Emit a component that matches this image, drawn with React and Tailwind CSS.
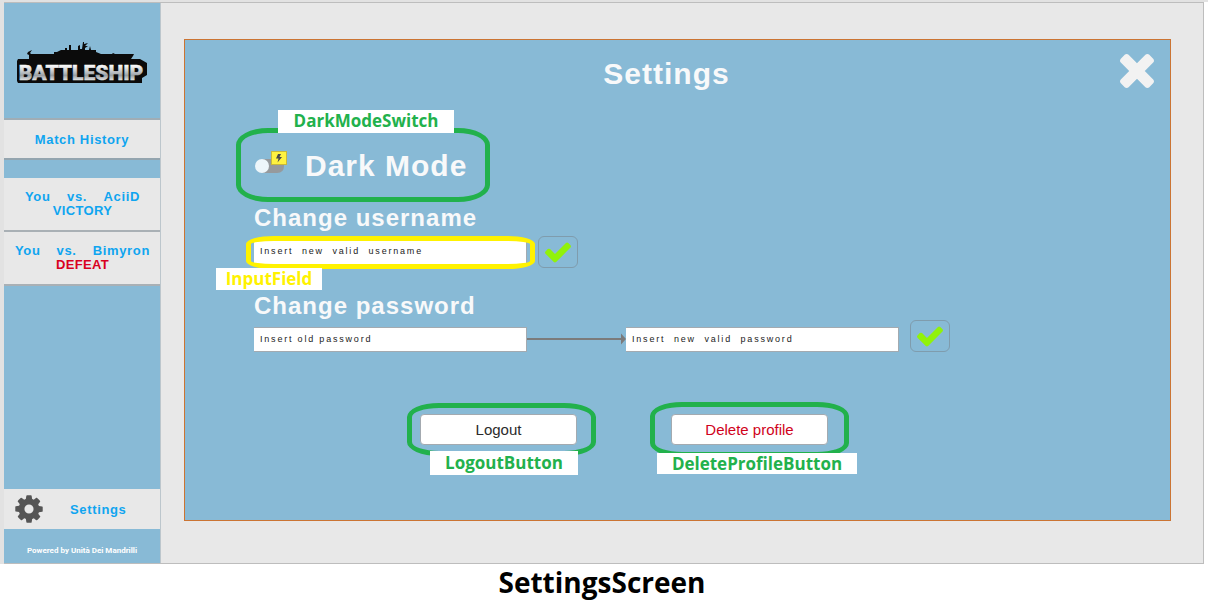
import { useState } from "react";

const CHECK =
  "M1671 566q0 40-28 68l-724 724-136 136q-28 28-68 28t-68-28l-136-136-362-362q-28-28-28-68t28-68l136-136q28-28 68-28t68 28l294 295 656-657q28-28 68-28t68 28l136 136q28 28 28 68z";
const TIMES =
  "M1490 1322q0 40-28 68l-136 136q-28 28-68 28t-68-28l-294-294-294 294q-28 28-68 28t-68-28l-136-136q-28-28-28-68t28-68l294-294-294-294q-28-28-28-68t28-68l136-136q28-28 68-28t68 28l294 294 294-294q28-28 68-28t68 28l136 136q28 28 28 68t-28 68l-294 294 294 294q28 28 28 68z";
const COG =
  "M1152 896q0-106-75-181t-181-75-181 75-75 181 75 181 181 75 181-75 75-181zm512-109v222q0 12-8 23t-20 13l-185 28q-19 54-39 91 35 50 107 138 10 12 10 25t-9 23q-27 37-99 108t-94 71q-12 0-26-9l-138-108q-44 23-91 38-16 136-29 186-7 28-36 28h-222q-14 0-24.500-8.500t-11.500-21.500l-28-184q-49-16-90-37l-141 107q-10 9-25 9-14 0-25-11-126-114-165-168-7-10-7-23 0-12 8-23 15-21 51-66.500t54-70.500q-27-50-41-99l-183-27q-13-2-21-12.500t-8-23.500v-222q0-12 8-23t19-13l186-28q14-46 39-92-40-57-107-138-10-12-10-24 0-10 9-23 26-36 98.500-107.500t94.500-71.500q13 0 26 10l138 107q44-23 91-38 16-136 29-186 7-28 36-28h222q14 0 24.500 8.500t11.500 21.500l28 184q49 16 90 37l142-107q9-9 24-9 13 0 25 10 129 119 165 170 7 8 7 22 0 12-8 23-15 21-51 66.500t-54 70.500q26 50 41 98l183 28q13 2 21 12.500t8 23.500z";

function Logo() {
  return (
    <svg viewBox="0 0 132 46" className="h-[46px] w-[132px]" role="img" aria-label="Battleship">
      <defs>
        <linearGradient id="steel" x1="0" y1="0" x2="0" y2="1">
          <stop offset="0.2" stopColor="#f8f8f8" />
          <stop offset="0.5" stopColor="#b4b9bd" />
          <stop offset="0.6" stopColor="#9aa0a5" />
          <stop offset="0.85" stopColor="#f2f2f2" />
        </linearGradient>
      </defs>
      <path
        d="M13 21V14L11 13L12 11L16 9L14 12L15 13H38V11H41L45 9H49V7H51V9H53V4H55V9H62V5L64 4V8H66L67 1H68V3L72 2L69 5H72L69 7V9H73L74 5L75 9H80V11L85 13H96L97 12L99 13H118L117 15L113 21Z"
        fill="#0b0b0b"
      />
      <path d="M2 18H124L131 22V34L126 37V42H2L1 40V20Z" fill="#0b0b0b" />
      <text
        x="65"
        y="39"
        textAnchor="middle"
        fontFamily="Roboto, 'Liberation Sans', sans-serif"
        fontWeight="900"
        fontSize="21"
        fill="url(#steel)"
        stroke="url(#steel)"
        strokeWidth="0.500"
      >
        BATTLESHIP
      </text>
    </svg>
  );
}

function MatchCard({ opponent, padding, result, color }) {
  return (
    <a href="#match" className={`block h-[54px] border-b-2 border-[#a9b0b5] bg-[#e8e8e8] pt-3 text-[13px] leading-[14px] font-bold ${padding}`}>
      <span className="flex justify-between tracking-wider text-[#0fa5f0]">
        <span>You</span>
        <span>vs.</span>
        <span>{opponent}</span>
      </span>
      <span className={`block text-center tracking-wide ${color}`}>{result}</span>
    </a>
  );
}

function Field({ label, type, text }) {
  return (
    <input
      aria-label={label}
      type={type}
      placeholder={text}
      className="h-[25px] w-[273px] border border-l-0 border-[#a3aab0] bg-white pb-0.5 pl-1.5 text-[9px] tracking-[0.2em] text-[#222] outline-none placeholder:text-[#222]"
    />
  );
}

function ConfirmButton({ label }) {
  return (
    <button type="button" aria-label={label} className="flex h-8 w-10 items-center justify-center rounded-md border border-[#7f9cad]">
      <svg viewBox="0 0 1792 1792" className="h-[30px] w-[30px]" fill="#91f20a">
        <path d={CHECK} />
      </svg>
    </button>
  );
}

function Tag({ className, children }) {
  return (
    <span className={`absolute flex items-center justify-center bg-white font-['Open_Sans','Noto_Sans',sans-serif] text-[17px] leading-none font-bold ${className}`}>
      {children}
    </span>
  );
}

export default function App() {
  const [dark, setDark] = useState(false);
  return (
    <div className="min-h-screen bg-white font-['Liberation_Sans',Arial,sans-serif]">
      <div className="border-t-2 border-l-4 border-[#e2e2e2] pr-1">
        <div className="flex border border-l-0 border-[#bdbdbd] bg-[#e8e8e8]">
          <aside className="flex w-[157px] shrink-0 flex-col border-r border-r-[#bcc6cc] bg-[#88bad6]">
            <div className="flex h-[117px] items-center justify-center border-b-2 border-[#a0adb5] pt-1.5">
              <Logo />
            </div>
            <h2 className="flex h-[38px] items-center justify-center bg-[#e8e8e8] pt-0.5 text-[13px] font-bold tracking-wider text-[#0fa5f0]">
              Match History
            </h2>
            <nav className="border-t-2 border-[#94a5af] pt-[18px]">
              <MatchCard opponent="AciiD" padding="pr-5 pl-[21px]" result="VICTORY" color="text-[#0fa5f0]" />
              <MatchCard opponent="Bimyron" padding="pr-2.5 pl-[11px]" result="DEFEAT" color="text-[#d9001f]" />
            </nav>
            <a href="#settings" className="mt-auto flex h-10 items-center bg-[#e8e8e8] pl-[9px] text-[13px] font-bold tracking-wider text-[#0fa5f0]">
              <svg viewBox="0 0 1792 1792" className="h-8 w-8" fill="#555">
                <path d={COG} />
              </svg>
              <span className="pt-0.5 pl-[25px]">Settings</span>
            </a>
            <p className="h-[34px] pt-1 text-center font-[Roboto,sans-serif] text-[8px] leading-9 font-bold text-white">Powered by Unità Dei Mandrilli</p>
          </aside>

          <main className="flex-1 pt-9 pr-8 pb-[42px] pl-[23px]">
            <section className="border border-[#cb7433] bg-[#88bad6] pb-[75px] text-[#f8f9fa]">
              <header className="flex items-start pt-3.5 pr-4 pl-7">
                <h1 className="flex-1 text-center text-[30px] leading-10 font-bold tracking-[1px]">Settings</h1>
                <button type="button" aria-label="Close settings">
                  <svg viewBox="302 366 1188 1188" className="h-[34px] w-[34px]" fill="#f2f2f2">
                    <path d={TIMES} />
                  </svg>
                </button>
              </header>

              <div className="pt-[52px] pl-[69px]">
                <div className="relative flex w-fit items-center gap-[18px]">
                  <span className="relative block h-[22px] w-[33px]">
                    <input
                      id="dark-mode"
                      type="checkbox"
                      role="switch"
                      checked={dark}
                      onChange={(e) => setDark(e.target.checked)}
                      className="absolute inset-0 m-0 cursor-pointer appearance-none"
                    />
                    <svg viewBox="0 0 33 22" className="pointer-events-none absolute -top-1 left-0 h-[22px] w-[33px]">
                      <path d="M8 8H30V15Q30 22 23 22H8Z" fill="#969a9d" />
                      <circle cx={dark ? 22 : 8} cy="15" r="7" fill="#edf6fa" />
                      <rect x="17.500" y="0.500" width="15" height="13" fill="#fff240" stroke="#c9b93a" />
                      <path d="M24 3L22 7.500H24.500L23.500 11.500L28 6H25.500L27 3Z" fill="#4a4a4a" />
                    </svg>
                  </span>
                  <label htmlFor="dark-mode" className="text-[30px] leading-10 font-bold tracking-[1px]">
                    Dark Mode
                  </label>
                  <span className="pointer-events-none absolute -top-[18px] -right-[23px] -bottom-4 -left-[18px] rounded-[32px/17px] border-5 border-[#22b14c]" />
                  <Tag className="-top-9 left-6 h-[23px] w-44 pb-0.5 text-[#22b14c]">DarkModeSwitch</Tag>
                </div>

                <form onSubmit={(e) => e.preventDefault()}>
                  <h2 className="pt-[18px] pb-1 text-2xl leading-7 font-bold tracking-[1px]">Change username</h2>
                  <div className="flex items-center gap-[11px]">
                    <div className="relative flex">
                      <Field label="New username" type="text" text="Insert  new  valid  username" />
                      <span className="pointer-events-none absolute -top-1 -right-2 -bottom-1 -left-2 rounded-[28px/8px] border-5 border-[#fff200]" />
                      <Tag className="top-7 -left-[38px] h-[22px] w-[106px] text-[#fff200]">InputField</Tag>
                    </div>
                    <ConfirmButton label="Save username" />
                  </div>
                </form>

                <form onSubmit={(e) => e.preventDefault()}>
                  <h2 className="pt-6 text-2xl leading-7 font-bold tracking-[1px]">Change password</h2>
                  <div className="flex items-end">
                    <Field label="Old password" type="password" text="Insert old password" />
                    <svg viewBox="0 0 99 25" className="h-[25px] w-[99px]" aria-hidden="true">
                      <path d="M0 12H95" stroke="#7b7b7b" strokeWidth="2" />
                      <path d="M94 6.500L99 12L94 17.500Z" fill="#7b7b7b" />
                    </svg>
                    <Field label="New password" type="password" text="Insert  new  valid  password" />
                    <span className="pl-[11px]">
                      <ConfirmButton label="Save password" />
                    </span>
                  </div>
                </form>

                <div className="flex gap-[94px] pt-[62px] pl-[166px]">
                  <div className="relative flex">
                    <span className="pointer-events-none absolute -top-[11px] -right-[19px] -bottom-[11px] -left-[13px] rounded-[32px/14px] border-5 border-[#22b14c]" />
                    <button type="button" className="h-[31px] w-[157px] rounded-sm border border-[#a3aab0] bg-white pt-px text-[15px] text-[#2b2b2b]">
                      Logout
                    </button>
                    <Tag className="top-[37px] left-2.5 h-6 w-[148px] pb-0.5 text-[#22b14c]">LogoutButton</Tag>
                  </div>
                  <div className="relative flex">
                    <span className="pointer-events-none absolute -top-3 -right-[21px] -bottom-3 -left-[21px] rounded-[32px/14px] border-5 border-[#22b14c]" />
                    <button type="button" className="h-[31px] w-[157px] rounded-sm border border-[#a3aab0] bg-white pt-px text-[15px] text-[#d0021b]">
                      Delete profile
                    </button>
                    <Tag className="top-[39px] -left-3.5 h-[21px] w-[200px] text-[#22b14c]">DeleteProfileButton</Tag>
                  </div>
                </div>
              </div>
            </section>
          </main>
        </div>
      </div>
      <p className="pr-1 text-center font-['Open_Sans','Noto_Sans',sans-serif] text-[28px] leading-9 font-bold text-black">SettingsScreen</p>
    </div>
  );
}
